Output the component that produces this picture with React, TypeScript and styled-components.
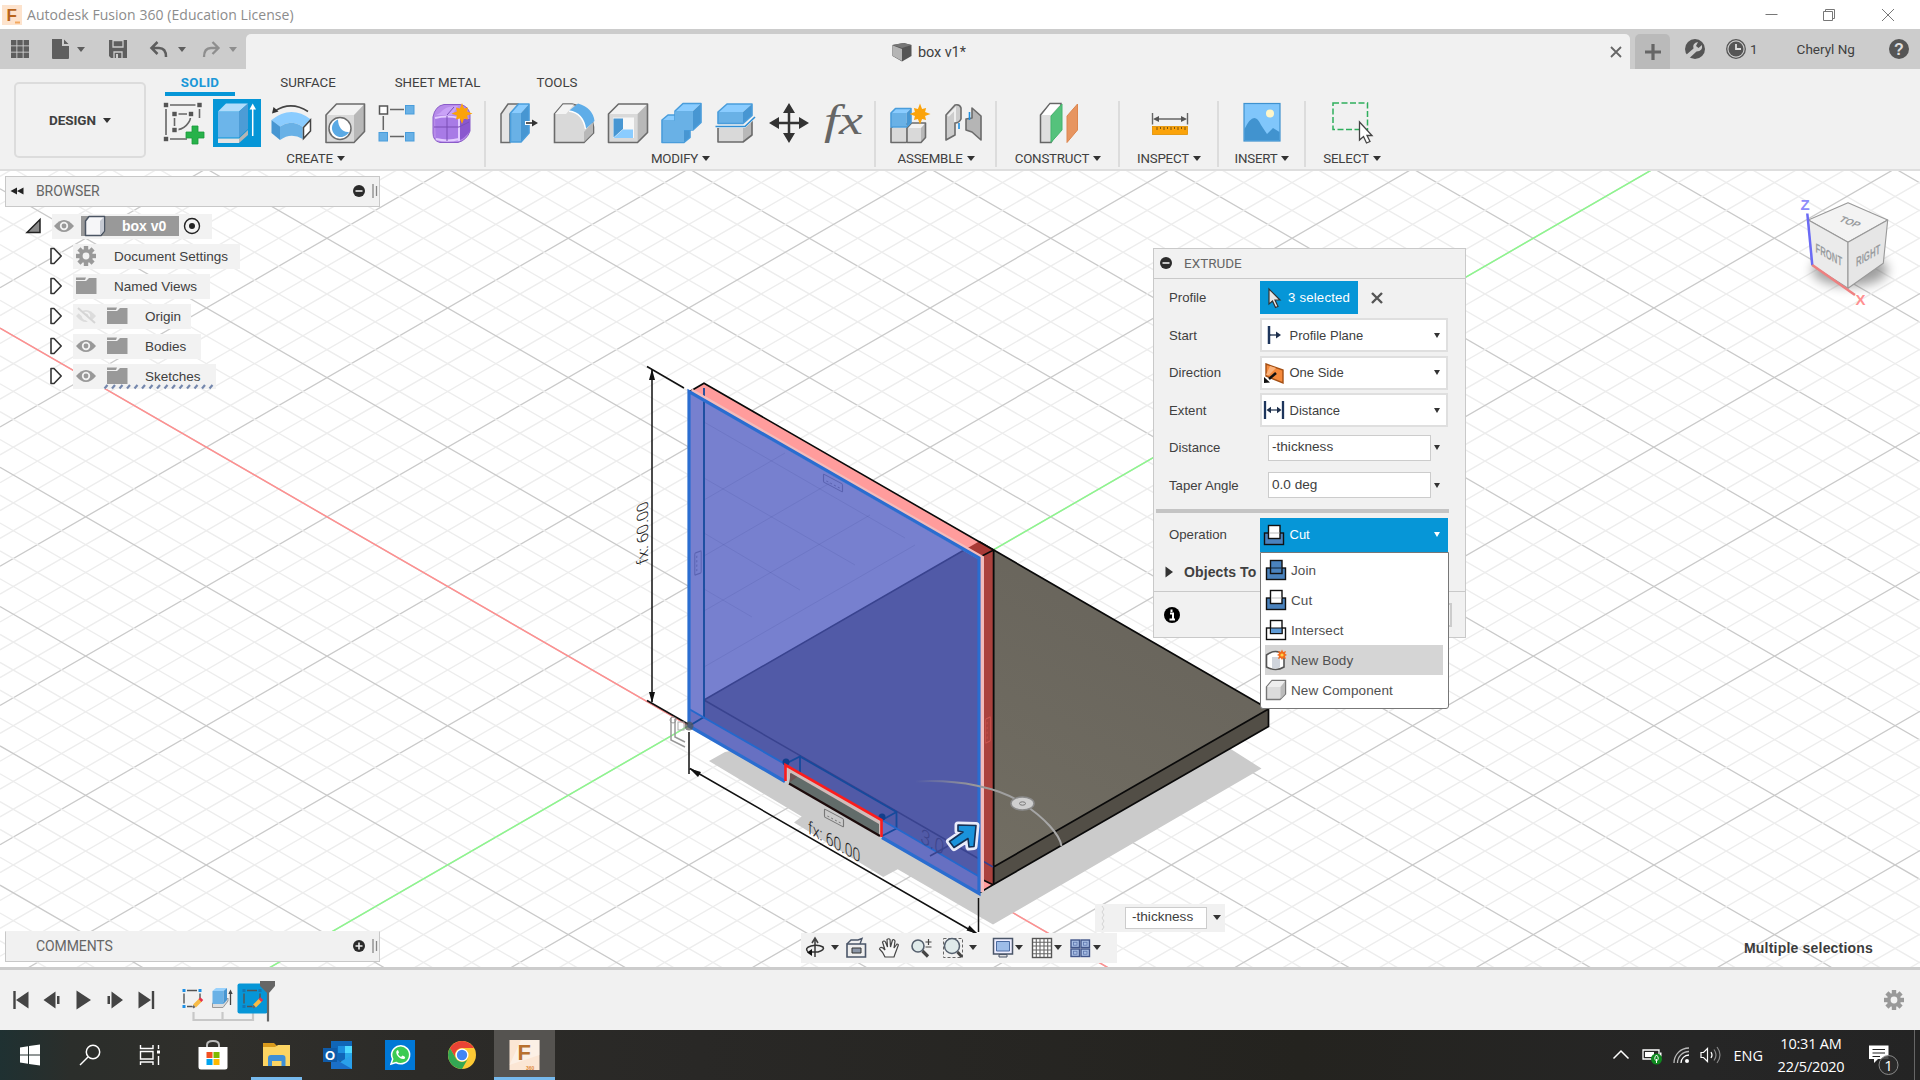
import React from "react";
import styled, { createGlobalStyle } from "styled-components";

const UI = `"Liberation Sans", Arial, sans-serif`;
const CAPS = `Roboto, "Liberation Sans", sans-serif`;
const WIN = `"Open Sans", "Noto Sans", sans-serif`;

const Global = createGlobalStyle`
  * { box-sizing: border-box; }
  html, body { margin: 0; padding: 0; background: #fff; }
  body { width: 1920px; height: 1080px; overflow: hidden; font-family: ${UI}; color: #404040; }
  svg { display: block; flex: none; overflow: visible; }
`;

const Screen = styled.div`
  display: flex;
  flex-direction: column;
  width: 1920px;
  height: 1080px;
  overflow: hidden;
`;

/* ---------- generic icon holder, origin in the middle ---------- */
const Ico = ({ s = 48, h, children }: { s?: number; h?: number; children: React.ReactNode }) => {
  const hh = h ?? s;
  return (
    <svg width={s} height={hh} viewBox={`${-s / 2} ${-hh / 2} ${s} ${hh}`}>
      {children}
    </svg>
  );
};

const Caret = styled.span<{ $c?: string; $w?: number }>`
  flex: none;
  width: 0;
  height: 0;
  border-left: ${(p) => p.$w ?? 4}px solid transparent;
  border-right: ${(p) => p.$w ?? 4}px solid transparent;
  border-top: ${(p) => (p.$w ?? 4) + 1.5}px solid ${(p) => p.$c ?? "#333"};
`;

/* ---------- title bar ---------- */
const TitleBar = styled.header`
  display: flex;
  align-items: center;
  flex: none;
  height: 29px;
  padding: 0 22px 0 2px;
  background: #fff;
`;
const TitleText = styled.span`
  flex: 1;
  padding-left: 5px;
  font: 14px ${WIN};
  letter-spacing: 0.05px;
  color: #8c8c8c;
`;
const WindowButtons = styled.div`
  display: flex;
  gap: 38px;
`;

/* ---------- tab bar ---------- */
const TabBar = styled.div`
  display: flex;
  align-items: flex-end;
  flex: none;
  height: 40px;
  background: #ccc;
`;
const QuickTools = styled.div`
  display: flex;
  align-items: center;
  width: 246px;
  height: 40px;
  padding-left: 10px;
`;
const Gap = styled.span<{ $w: number }>`
  flex: none;
  width: ${(p) => p.$w}px;
`;
const DocTab = styled.div`
  display: flex;
  align-items: center;
  width: 1384px;
  height: 35px;
  padding: 1px 5px 0 645px;
  border-radius: 5px 5px 0 0;
  background: #f1f1f1;
`;
const DocName = styled.span`
  flex: 1;
  padding-left: 5px;
  font: 14.5px ${CAPS};
  letter-spacing: -0.1px;
`;
const NewTab = styled.div`
  display: flex;
  align-items: center;
  justify-content: center;
  width: 35px;
  height: 35px;
  margin-left: 5px;
  border-radius: 5px 5px 0 0;
  background: #bababa;
`;
const Account = styled.div`
  display: flex;
  align-items: center;
  height: 40px;
  padding-left: 14px;
  font: 13.5px ${CAPS};
`;

/* ---------- ribbon ---------- */
const Ribbon = styled.section`
  display: flex;
  flex: none;
  height: 102px;
  padding: 13px 0 12px 14px;
  border-bottom: 2px solid #dedede;
  background: #f1f1f1;
`;
const DesignButton = styled.div`
  display: flex;
  align-items: center;
  justify-content: center;
  gap: 7px;
  width: 132px;
  height: 76px;
  border: 2px solid #dcdcdc;
  border-radius: 5px;
  font: 700 13.5px ${CAPS};
  letter-spacing: -0.1px;
`;
const RibbonMain = styled.div`
  display: flex;
  flex-direction: column;
  margin-top: -13px;
`;
const TabRow = styled.nav`
  display: flex;
  height: 28px;
  padding-left: 19px;
`;
const RibbonTab = styled.div<{ $w: number; $on?: boolean }>`
  width: ${(p) => p.$w}px;
  height: 27px;
  padding-top: 6px;
  border-bottom: 4px solid ${(p) => (p.$on ? "#0696d7" : "transparent")};
  font: ${(p) => (p.$on ? 700 : 400)} 13.3px/16px ${CAPS};
  letter-spacing: ${(p) => (p.$on ? 0.3 : -0.05)}px;
  text-align: center;
  color: ${(p) => (p.$on ? "#1a98d8" : "#404040")};
`;
const Groups = styled.div`
  display: flex;
  height: 68px;
`;
const Group = styled.div<{ $w: number; $last?: boolean }>`
  display: flex;
  flex-direction: column;
  align-items: center;
  width: ${(p) => p.$w}px;
  height: 66px;
  margin-top: 5px;
  border-right: ${(p) => (p.$last ? 0 : 2)}px solid #dcdcdc;
`;
const IconRow = styled.div`
  display: flex;
  height: 48px;
  margin-top: -2px;
`;
const Cell = styled.div<{ $shift?: number }>`
  display: flex;
  justify-content: center;
  width: 54px;
  padding-left: ${(p) => (p.$shift ?? 0) * 2}px;
`;
const GroupLabel = styled.div`
  display: flex;
  align-items: center;
  gap: 4px;
  height: 18px;
  margin-top: 2px;
  padding-left: 1px;
  font: 13.3px ${CAPS};
  letter-spacing: -0.2px;
  white-space: nowrap;
`;

const G = { f: "#d9d9d9", t: "#f2f2f2", s: "#b8b8b8", o: "#6b6b6b" };
const B = { f: "#69b1e6", t: "#8accff", s: "#4796d2", o: "#4a9ddb" };
type Pal = typeof G;

const Box3 = ({ x, y, w, h, dx, dy, c }: { x: number; y: number; w: number; h: number; dx: number; dy: number; c: Pal }) => (
  <g strokeLinejoin="round">
    <path d={`M${x} ${y}h${w}v${h}h${-w}z`} fill={c.f} />
    <path d={`M${x} ${y}l${dx} ${-dy}h${w}l${-dx} ${dy}z`} fill={c.t} />
    <path d={`M${x + w} ${y}l${dx} ${-dy}v${h}l${-dx} ${dy}z`} fill={c.s} />
    <path d={`M${x} ${y}l${dx} ${-dy}h${w}v${h}l${-dx} ${dy}h${-w}z`} fill="none" stroke={c.o} strokeWidth="1.6" />
  </g>
);
const Star = ({ x, y, r }: { x: number; y: number; r: number }) => {
  const pts = Array.from({ length: 16 }, (_, i) => {
    const a = (i * Math.PI) / 8 - Math.PI / 2;
    const k = i % 2 ? 0.52 : i % 4 === 0 ? 1 : 0.82;
    return `${x + Math.cos(a) * r * k},${y + Math.sin(a) * r * k}`;
  });
  return <polygon points={pts.join(" ")} fill="#fba30a" />;
};

const SketchIcon = () => (
  <Ico>
    <path
      d="M-17-18H16.500M-17-18V16M16.500-18V-5M-17 16H4M-8.500-9H8M-8.500-9V7M8-9C8 0 1 7-8.500 7"
      fill="none"
      stroke="#666"
      strokeWidth="1.600"
    />
    {[[-17, -18], [16.5, -18], [-17, 16], [-8.5, -9], [8, -9], [-8.5, 7]].map(([x, y]) => (
      <g key={`${x},${y}`}>
        <rect x={x - 4} y={y - 4} width="8" height="8" fill="#f1f1f1" />
        <rect x={x - 2.2} y={y - 2.2} width="4.4" height="4.4" fill="#555" />
      </g>
    ))}
    <path d="M9 3h6v6h6v6h-6v6h-6v-6h-6v-6h6z" fill="#27b24a" stroke="#199a3a" strokeWidth=".8" />
  </Ico>
);
const ExtrudeIcon = () => (
  <Ico>
    <rect x="-24" y="-24" width="48" height="48" fill="#0696d7" />
    <path d="M-19-11.5H2V14.500H-19z" fill="#6cb5ea" />
    <path d="M-19-11.500L-11-19.500H11L2-11.500z" fill="#b0dcfb" />
    <path d="M2-11.500L11-19.500V6L2 14.500z" fill="#4c9cd6" />
    <path d="M-19 15.500H2V20H-19z" fill="#e4e4e4" />
    <path d="M2 15.500L11 7V12L2 20z" fill="#b5b5b5" />
    <path d="M15.700 13V-14" stroke="#fff" strokeWidth="1.500" />
    <path d="M12.500-13.500L15.700-19.500 19-13.500z" fill="#fff" />
  </Ico>
);
const RevolveIcon = () => (
  <Ico>
    <path d="M-19.500-3Q0-18.500 20-3.500L11.700 4Q0-4-11 3.500z" fill="#8accff" />
    <path d="M-19.500-3L-11 3.500V17L-19.500 10z" fill="#4796d2" />
    <path d="M-11 3.500Q0-4 11.700 4V16Q0 9-11 17z" fill="#69b1e6" />
    <path d="M12.500 4.500L19.500-3V8L12.500 15.500z" fill="#fff" stroke="#444" strokeWidth="1.500" />
    <path d="M-16-12Q0-22.500 17-11.500" fill="none" stroke="#444" strokeWidth="1.500" />
    <path d="M-19-9.500L-17.500-16 -12.500-11.500z" fill="#333" />
  </Ico>
);
const HoleIcon = () => (
  <Ico>
    <Box3 x={-19} y={-8} w={28} h={27.5} dx={10.500} dy={11} c={G} />
    <circle cx="-5" cy="5.500" r="11" fill="#fff" stroke="#6b6b6b" strokeWidth="1.500" />
    <path d="M-7-3.500A9 9 0 1 0 4 9C-2 10-7 4-7-3.500z" fill="#5aa9e4" />
  </Ico>
);
const PatternIcon = () => (
  <Ico>
    <path d="M-6-13.500H8M-6 13.500H8M-12.700-7V7" stroke="#666" strokeWidth="1.500" />
    <rect x="-16.500" y="-17" width="8" height="8" fill="#fff" stroke="#555" strokeWidth="1.500" />
    {[[9.500, -17.500], [9.500, 9.500], [-17, 9.500]].map(([x, y]) => (
      <rect key={`${x}${y}`} x={x} y={y} width="8.500" height="8.500" fill="#69b1e6" stroke="#4a9ddb" />
    ))}
  </Ico>
);
const FormIcon = () => (
  <Ico>
    <path d="M-19-6Q-17-17-8-18.500H8Q17-17 18-8V8Q15 17 6 19.500H-12Q-19 18-19 10z" fill="#b78bea" stroke="#8a5cc8" />
    <path d="M-12-10Q-6-18 6-17L0-8H-16z" fill="#c9a2f7" />
    <path d="M8-4L18-4V8Q13 15 8 17z" fill="#8a57cf" />
    <path d="M-17-6Q-4-9 7-6V16Q-4 19-16 16z" fill="#a87be6" />
    <path d="M-17-5Q-5-8 7-5M7-6V18M-16 16Q-4 19 7 16" stroke="#e3ccff" fill="none" strokeWidth="2" />
    <path d="M-18 4H7L17-1M-5-7V18M-5-8L2-16" stroke="#7a4fb5" fill="none" strokeWidth="1" />
    <Star x={10} y={-9.500} r={10.500} />
  </Ico>
);
const PressPullIcon = () => (
  <Ico>
    <path d="M-19-9L-12-19H-2V-12L-10-9V19.500H-19z" fill="#e4e4e4" stroke="#6b6b6b" strokeWidth="1.500" />
    <Box3 x={-9.500} y={-10} w={10.500} h={29} dx={8} dy={9} c={B} />
    <path d="M5 0H13" stroke="#fff" strokeWidth="4" />
    <path d="M6 0H13" stroke="#333" strokeWidth="1.600" />
    <path d="M12-3.500L18 0 12 3.500z" fill="#333" />
  </Ico>
);
const FilletIcon = () => (
  <Ico>
    <path d="M-19.500-9L-11-19H-2Q17-15 19.500 4V10L10 19.500H-19.500z" fill="#d9d9d9" stroke="#6b6b6b" strokeWidth="1.600" />
    <path d="M-19-9L-11-18.500H0L-8-9z" fill="#f4f4f4" />
    <path d="M10 9L19-1V10L10 19z" fill="#b8b8b8" />
    <path d="M-4-13L4-19.500Q19-15 20.500-2L11.500 6Q9-10-5-12z" fill="#5fade8" />
    <path d="M-5-12Q9-10 11.500 6" stroke="#fff" fill="none" strokeWidth="1.500" />
  </Ico>
);
const ShellIcon = () => (
  <Ico>
    <Box3 x={-19.500} y={-9} w={29} h={28.500} dx={10} dy={10} c={G} />
    <rect x="-15" y="-5.500" width="21" height="20.500" fill="#f7f7f7" />
    <path d="M-14.500-4.500H-5V6L-14.500 14.500z" fill="#4796d2" />
    <path d="M-14.500 15L-5 6.500H5V15z" fill="#8accff" />
  </Ico>
);
const CombineIcon = () => (
  <Ico>
    <Box3 x={-19} y={-3} w={22} h={22.500} dx={6} dy={5} c={B} />
    <Box3 x={-6} y={-12} w={18} h={19} dx={8} dy={7.500} c={B} />
    <path d="M-18-2.500H3V19H-18zM-6-11.500H12V7H-6z" fill="#69b1e6" />
  </Ico>
);
const SplitIcon = () => (
  <Ico>
    <Box3 x={-17} y={5} w={25} h={14} dx={9} dy={7} c={G} />
    <path d="M-19.500 0H9L20-10V-4L10 5H-19.500z" fill="#f1f1f1" />
    <Box3 x={-17} y={-11} w={25} h={11.500} dx={9} dy={8} c={B} />
    <path d="M-19.500 3.500H10L20-6" stroke="#2f8fd6" fill="none" strokeWidth="1.600" />
  </Ico>
);
const MoveIcon = () => (
  <Ico>
    <path d="M0-15V15M-15 0H15" stroke="#333" strokeWidth="2.500" />
    <path d="M0-20L6-10H-6zM0 20L6 10H-6zM-20 0L-10-6V6zM20 0L10-6V6z" fill="#333" />
  </Ico>
);
const FxIcon = () => (
  <Ico>
    <text x="-18" y="11" fontFamily="Liberation Serif, serif" fontStyle="italic" fontSize="42" fill="#666" textLength="39" lengthAdjust="spacingAndGlyphs">
      fx
    </text>
  </Ico>
);
const NewComponentIcon = () => (
  <Ico>
    <Box3 x={-18} y={5} w={15} h={14.500} dx={5} dy={4} c={G} />
    <Box3 x={-2} y={5} w={14} h={14.500} dx={4.500} dy={5} c={G} />
    <Box3 x={-18} y={-10} w={15.500} h={14} dx={4.500} dy={4.500} c={B} />
    <Star x={11} y={-9} r={10.500} />
  </Ico>
);
const JointIcon = () => (
  <Ico>
    <path d="M-17-8L-8-18Q-3-19-2-15V-4Q-4 0-8 0V12L-17 17z" fill="#ccc" stroke="#6b6b6b" strokeWidth="1.600" strokeLinejoin="round" />
    <path d="M-15-7L-8-14V-1" fill="none" stroke="#eee" strokeWidth="2" />
    <path d="M18-7L9-15V-5L3-4V7L9 9 18 17z" fill="#b5b5b5" stroke="#6b6b6b" strokeWidth="1.600" strokeLinejoin="round" />
    <path d="M-4 0V6M6.500-11V-3" stroke="#1f8fe0" strokeWidth="1.600" />
  </Ico>
);
const ConstructIcon = () => (
  <Ico>
    <path d="M-18.500-8L-9-19.500H2V0L-8 19.500H-18.500z" fill="#dedede" stroke="#666" strokeWidth="1.500" />
    <path d="M-17-8L-9-18.500H1L-8-8z" fill="#fff" />
    <path d="M-8-7L3-19V7L-8 19.500z" fill="#55c27c" stroke="#43b56c" />
    <path d="M8-7L18.500-19V7L8 19.500z" fill="#e79560" stroke="#dd864e" />
  </Ico>
);
const MeasureIcon = () => (
  <Ico>
    <path d="M-17.500-10V1.500M17.500-10V1.500M-13-4H13" stroke="#666" strokeWidth="1.400" />
    <path d="M-17-4L-11-7V-1zM17-4L11-7V-1z" fill="#555" />
    <rect x="-17.500" y="3.500" width="35" height="8" fill="#fba30a" stroke="#e08f00" strokeWidth=".8" />
    <path d="M-13 4v3M-9.500 4v2M-6 4v3M-2.500 4v2M1 4v3M4.500 4v2M8 4v3M11.500 4v2M15 4v3" stroke="#7a5310" />
  </Ico>
);
const InsertIcon = () => (
  <Ico>
    <rect x="-18" y="-19.500" width="36" height="37.500" fill="#80c6fb" stroke="#3f92cf" strokeWidth="1.200" />
    <path d="M-17.500 6Q-8-14-1 2L5 11 11 5 17.500 9V17.500H-17.500z" fill="#4193cf" />
    <circle cx="8" cy="-9.500" r="4" fill="#fff6c8" />
  </Ico>
);
const SelectIcon = () => (
  <Ico>
    <rect x="-19" y="-20" width="34.500" height="26.500" fill="none" stroke="#2fae5c" strokeWidth="1.500" strokeDasharray="6 2.500" />
    <path d="M7.500-1V17L11.500 13.500 14.500 20 18 18.500 15 12.500H20z" fill="#fff" stroke="#444" strokeWidth="1.300" />
  </Ico>
);

/* ---------- viewport ---------- */
const Viewport = styled.main`
  position: relative;
  flex: none;
  height: 796px;
  overflow: hidden;
  background: #fff;
`;
const Scene = styled.svg`
  position: absolute;
  inset: 0;
`;
const Floating = styled.div<{ $x: number; $y: number }>`
  position: absolute;
  left: ${(p) => p.$x}px;
  top: ${(p) => p.$y}px;
`;

const K = 69.63 / 120.63;
const STEP = (69.63 * 2) / 5;
const GridLines = () => {
  const out: React.ReactNode[] = [];
  const c0 = 328.1;
  const d0 = 1123.3;
  for (let i = -50; i < 75; i++) {
    const major = ((i % 5) + 5) % 5 === 0;
    const a = c0 + i * STEP;
    const b = d0 + i * STEP;
    out.push(
      <path
        key={i}
        d={`M0 ${a}L1920 ${a + 1920 * K}M0 ${b}L1920 ${b - 1920 * K}`}
        stroke={major ? "#cacaca" : "#ededed"}
        strokeWidth={major ? 1.3 : 1.4}
      />
    );
  }
  return <g>{out}</g>;
};

const Constraint = ({ t, c = "#777" }: { t: string; c?: string }) => (
  <g transform={t} fill="none" stroke={c} strokeWidth="1.200">
    <rect x="-10" y="-4" width="20" height="8" rx="1" />
    <path d="M-7 1.500h2M-3 1.500h2M1 1.500h2M5 1.500h2" />
  </g>
);

const Model = () => (
  <Scene width="1920" height="796" viewBox="0 171 1920 796">
    <defs>
      <linearGradient id="plate" x1="0" y1="1" x2="1" y2="0">
        <stop offset="0" stopColor="#757165" />
        <stop offset="1" stopColor="#66625a" />
      </linearGradient>
      <linearGradient id="arc" x1="915" x2="1062" y1="0" y2="0" gradientUnits="userSpaceOnUse">
        <stop offset="0" stopColor="#999" stopOpacity="0" />
        <stop offset=".4" stopColor="#999" />
        <stop offset="1" stopColor="#aaa" />
      </linearGradient>
      <filter id="soft" x="-50%" y="-50%" width="200%" height="200%">
        <feGaussianBlur stdDeviation="6" />
      </filter>
    </defs>
    <GridLines />
    <path d={`M0 328.100L1920 ${328.1 + 1920 * K}`} stroke="#ff8f8f" strokeWidth="1.500" />
    <path d={`M0 1123.300L1920 ${1123.3 - 1920 * K}`} stroke="#8df78d" strokeWidth="1.500" />

    {/* ground shadow */}
    <path d="M709 761L725 752 L979 700 L1230 748.500 L1261.500 768.500 L993 924.500 L897.700 869.300 L883.300 877 L794 822.500 L801.700 816.500z" fill="#cbcbcb" />

    {/* base plate */}
    <path d="M704 700L979 541.500 1268.500 709 993.500 867z" fill="url(#plate)" />
    <path d="M993.500 867L1268.500 709V726.500L993.500 884.500z" fill="#524e46" />
    <path d="M979 541.500L1268.500 709V726.500L993.500 884.500M993.500 867L1268.500 709M993.500 550V884" fill="none" stroke="#0a0a0a" strokeWidth="1.700" />

    {/* cut volume: top and right faces */}
    <path d="M689 391.500L704 383.200 993.500 550 979 558z" fill="#ff9c9c" />
    <path d="M965 549.500L979 541.500 993.500 550 979 558z" fill="#a93a37" />
    <path d="M979 558L993.500 550V884.500L979 893z" fill="#ab423e" />
    <path d="M979 878L993.500 884.500 979 893z" fill="#ff9c9c" />
    <path d="M689 392L704 383.200 993.500 550M979 557.500L993.500 550V884.500L979 893M979 878L993.500 885" fill="none" stroke="#0a0a0a" strokeWidth="1.600" />

    {/* selected profile */}
    <path d="M689 391.500L979 558V893.500L882 837.500V820L785 764V781.500L689 726z" fill="#7780cf" />
    <path d="M704 700L965 549.500 979 557.500V876.500L882 820.500 785 764.500 704 717.500z" fill="#515aa7" />
    <path d="M689 709L785 764V781.500L689 726zM882 820L979 876.500V893.500L882 837.500z" fill="#6770c2" />
    <g opacity=".14" stroke="#3a3f90" fill="none">
      <path d="M704 478L855 565M704 533L800 590M704 589L752 617M704 422L905 538M704 611L870 515M704 500L785 453M704 556L830 483M704 667L915 545" />
    </g>
    <path d="M704 700L965 549.500M704 700L993 867" fill="none" stroke="#39438f" strokeWidth="1.500" />
    <path d="M704 388V717L689 726M785 764L800 756.500V772M800 756.500L896.500 812V828.500L882 836M882 820L896.500 812" fill="none" stroke="#164a9c" strokeWidth="1.800" />
    <path d="M689 709L785 764M882 820L979 876.500" stroke="#2468cc" strokeWidth="2" />
    <path d="M691 391L981.500 558V892" fill="none" stroke="#f3bcbc" strokeWidth="5" />
    <path d="M785 781.500L689 726V391.500L979 558V893.500L882 837.500" fill="none" stroke="#2a6dd0" strokeWidth="3.200" />
    <circle cx="786" cy="762" r="3.500" fill="#123f8c" />
    <circle cx="882" cy="817" r="3.500" fill="#123f8c" />

    {/* slot */}
    <path d="M787 766L881 820V836L789 783.500z" fill="#d1bcba" />
    <path d="M791 773L879 824V835L789 783z" fill="#626c6a" />
    <path d="M790 773L797 777 790 782z" fill="#6c5555" />
    <path d="M789 783.500L880 836" stroke="#1c0b0b" strokeWidth="2.200" />
    <path d="M785.500 781V765L881.500 820V837" fill="none" stroke="#fb1d1d" strokeWidth="2.600" />

    {/* dimensions */}
    <g stroke="#111" strokeWidth="1.500" fill="none">
      <path d="M652 369V702M647 366.500L684 388M647 700.500L688 724" />
      <path d="M689 732V774M978.500 898V932M690 768.500L977 934" />
    </g>
    <path d="M652 369l3 11h-6zM652 703l3-11h-6zM689.500 768.500l11.500 3.500-3 5zM978 934l-11.500-3.500 3-5z" fill="#111" />
    <g fontFamily="Roboto, sans-serif" fontWeight="300" fontSize="18">
      <text transform="matrix(0 -1 .87 -.35 648 562)" textLength="62" lengthAdjust="spacingAndGlyphs" fill="#222">
        fx: 60.00
      </text>
      <text transform="matrix(.87 .5 0 1 808 833)" textLength="60" lengthAdjust="spacingAndGlyphs" fill="#222">
        fx: 60.00
      </text>
      <text transform="matrix(.87 .5 -.1 1 920 842)" fill="#3d458d" fontSize="20">
        3.0
      </text>
    </g>
    <path d="M930 856L948 846" stroke="#39438f" strokeWidth="1.500" />
    <Constraint t="matrix(.95 .5 0 1 834 818)" />
    <Constraint t="matrix(.95 .5 0 1 833 483)" c="#5a62b0" />
    <Constraint t="matrix(0 1.100 -.8 .3 698 563)" c="#5a62b0" />
    <Constraint t="matrix(0 1.200 -.6 .3 988 730)" c="#cc5550" />
    <path d="M671 718v22l14 7M675 719v18l10 5" fill="none" stroke="#999" strokeWidth="1.500" />
    <circle cx="673" cy="720" r="3" fill="none" stroke="#999" />
    <circle cx="689" cy="726" r="4.500" fill="#555" opacity=".7" />
    <rect x="678" y="722" width="6" height="8" fill="none" stroke="#aaa" />

    {/* angle manipulator */}
    <path d="M915 781.500C960 779 1000 788 1022 803C1045 818 1060 835 1061.500 846" fill="none" stroke="url(#arc)" strokeWidth="2" />
    <ellipse cx="1022.500" cy="803.500" rx="11.500" ry="6.500" fill="#cfcfcf" stroke="#8b8b8b" strokeWidth="1.500" />
    <ellipse cx="1022.500" cy="803.500" rx="3" ry="1.700" fill="none" stroke="#777" />
    <g strokeLinejoin="round">
      <path d="M958 825L976 825.500 974 846.500 969 847 968 838.500 954 847.500 949.500 841.500 963 832 958 831z" fill="#eef" stroke="#e9ebfa" strokeWidth="7" />
      <path d="M958 825L976 825.500 974 846.500 969 847 968 838.500 954 847.500 949.500 841.500 963 832 958 831z" fill="#1a93dc" stroke="#153055" strokeWidth="1.600" />
    </g>

    {/* view cube */}
    <ellipse cx="1850" cy="270" rx="38" ry="16" fill="#000" opacity=".38" filter="url(#soft)" />
    <g stroke="#999" strokeWidth="1.100" strokeLinejoin="round">
      <path d="M1808.300 220L1848 202.700 1887.700 220 1848 242.300z" fill="#f3f3f3" />
      <path d="M1808.300 220L1848 242.300V288.300L1811.700 265z" fill="#ebebeb" />
      <path d="M1887.700 220L1848 242.300V288.300L1883.300 263.300z" fill="#e6e6e6" />
    </g>
    <g fontFamily="Liberation Sans, sans-serif" fontWeight="700" fill="#9a9da0">
      <text transform="matrix(.95 .52 0 1.200 1815.500 252)" fontSize="11" textLength="28" lengthAdjust="spacingAndGlyphs">FRONT</text>
      <text transform="matrix(.9 -.52 0 1.200 1856 267)" fontSize="11" textLength="27" lengthAdjust="spacingAndGlyphs">RIGHT</text>
      <text transform="matrix(.95 .35 -.6 .6 1838 221)" fontSize="12" textLength="20" lengthAdjust="spacingAndGlyphs">TOP</text>
    </g>
    <path d="M1807.300 213.500L1812.300 265" stroke="#6a6af5" strokeWidth="2.500" />
    <path d="M1812.300 265L1855 295" stroke="#ee8080" strokeWidth="2.500" />
    <g fontFamily="Liberation Sans, sans-serif" fontWeight="700" fontSize="15">
      <text x="1800.500" y="210" fill="#8c8cfa">Z</text>
      <text x="1855.500" y="305" fill="#ff9090">X</text>
    </g>
  </Scene>
);

/* ---------- browser ---------- */
const PanelBar = styled.div<{ $noTop?: boolean }>`
  display: flex;
  align-items: center;
  width: 375px;
  height: 31px;
  padding: 0 0 1px 4px;
  border: 1.5px solid #c8c8c8;
  ${(p) => p.$noTop && "border-top-color: #f1f1f1;"}
  background: #f1f1f1;
  font: 14px ${CAPS};
  letter-spacing: -0.1px;
  color: #666;
`;
const PanelTitle = styled.span`
  flex: 1;
  padding-left: 12px;
`;
const Tree = styled.div`
  padding-top: 4px;
`;
const TreeRow = styled.div<{ $indent: number }>`
  display: flex;
  align-items: center;
  height: 30px;
  padding-left: ${(p) => p.$indent}px;
`;
const TreeBody = styled.div<{ $w: number; $pad?: number }>`
  display: flex;
  align-items: center;
  position: relative;
  width: ${(p) => p.$w}px;
  height: 25px;
  margin-left: 11px;
  padding-left: ${(p) => p.$pad ?? 3}px;
  background: #f2f2f2;
  font-size: 13.5px;
  white-space: nowrap;
`;
const RootChip = styled.div`
  display: flex;
  align-items: center;
  width: 98px;
  height: 20px;
  margin: 0 3px 0 6px;
  padding-left: 3px;
  background: #999;
  color: #fff;
  font: 700 14px ${UI};
`;
const Squiggle = styled.span`
  position: absolute;
  left: 31px;
  right: 2px;
  bottom: 0;
`;

const EyeIcon = ({ off }: { off?: boolean }) => (
  <Ico s={22} h={20}>
    <path d="M-10 0Q0-12 10 0Q0 12-10 0z" fill={off ? "#dcdcdc" : "#999"} />
    <circle r="4.200" fill="#f2f2f2" />
    <circle r="2.400" fill={off ? "#dcdcdc" : "#999"} />
    {off && <path d="M-9-7L8 9" stroke="#f2f2f2" strokeWidth="4" />}
    {off && <path d="M-8-8L9 7" stroke="#d5d5d5" strokeWidth="2" />}
  </Ico>
);
const FolderIcon = () => (
  <Ico s={22} h={20}>
    <path d="M-10-8.500H0L-1-6H-10zM-10-5H0L3-8H10.500V8H-10z" fill="#999" />
  </Ico>
);
const GearIcon = ({ r = 10 }: { r?: number }) => (
  <Ico s={22}>
    {[0, 45, 90, 135].map((a) => (
      <rect key={a} x={-2.200} y={-r} width="4.400" height={r * 2} fill="#999" transform={`rotate(${a})`} />
    ))}
    <circle r={r * 0.7} fill="#999" />
    <circle r={r * 0.34} fill="#f2f2f2" />
  </Ico>
);
const Expander = () => (
  <Ico s={12} h={20}>
    <path d="M-5-7.500H-2L5.200 0 -2 7.500H-5z" fill="#fff" stroke="#333" strokeWidth="1.600" strokeLinejoin="round" />
  </Ico>
);
const Knob = ({ plus, r = 6 }: { plus?: boolean; r?: number }) => (
  <Ico s={14}>
    <circle r={r} fill="#2b2b2b" />
    <path d={plus ? "M-3.500 0H3.500M0-3.500V3.500" : "M-3.500 0H3.500"} stroke="#eee" strokeWidth="1.600" />
  </Ico>
);
const Grip = () => (
  <Ico s={8} h={16}>
    <path d="M-2-7V7M1.500-5V5" stroke="#888" strokeWidth="1.300" />
  </Ico>
);

const tree = [
  { label: "Document Settings", kind: "gear", w: 167 },
  { label: "Named Views", kind: "folder", w: 137 },
  { label: "Origin", kind: "off", w: 118 },
  { label: "Bodies", kind: "eye", w: 128 },
  { label: "Sketches", kind: "eye", w: 143, line: true },
];

/* ---------- extrude dialog ---------- */
const Dialog = styled.div`
  display: flex;
  flex-direction: column;
  width: 313px;
  height: 390px;
  border: 1.5px solid #c9c9c9;
  background: #f1f1f1;
  font-size: 13.2px;
`;
const DialogHead = styled.div`
  display: flex;
  align-items: center;
  gap: 11px;
  height: 30px;
  padding: 0 0 1px 5px;
  border-bottom: 1.5px solid #c9c9c9;
  font: 13.5px ${CAPS};
  color: #666;
`;
const Row = styled.div`
  display: flex;
  align-items: center;
  height: 37.5px;
  padding-left: 15px;
`;
const RowLabel = styled.span`
  width: 91px;
`;
const Chip = styled.div`
  display: flex;
  align-items: center;
  gap: 4px;
  width: 98px;
  height: 33px;
  margin-right: 11px;
  padding-left: 4px;
  background: #0696d7;
  color: #fff;
  letter-spacing: 0.2px;
`;
const Combo = styled.div<{ $on?: boolean }>`
  display: flex;
  align-items: center;
  width: 188px;
  height: 34px;
  padding: 0 6px 0 1px;
  border: 2px solid ${(p) => (p.$on ? "#0696d7" : "#dfdfdf")};
  background: ${(p) => (p.$on ? "#0696d7" : "#fff")};
  color: ${(p) => (p.$on ? "#fff" : "#404040")};
  font-size: 13px;
`;
const ComboText = styled.span`
  flex: 1;
  padding-left: 4.5px;
`;
const Input = styled.div<{ $w: number; $h?: number; $ml?: number; $pl?: number }>`
  display: flex;
  align-items: center;
  width: ${(p) => p.$w}px;
  height: ${(p) => p.$h ?? 26}px;
  margin: 0 3px 0 ${(p) => p.$ml ?? 8}px;
  padding: 0 0 2px ${(p) => p.$pl ?? 3}px;
  border: 1.5px solid #ccc;
  background: #fff;
  font-size: 13.6px;
`;
const Rule = styled.div`
  width: 293px;
  height: 4px;
  margin: 5px 0 3px 2px;
  background: #c4c4c4;
`;
const Bold = styled.span`
  padding-left: 7px;
  font: 700 14px ${UI};
  letter-spacing: 0.1px;
`;
const Foot = styled.div`
  display: flex;
  align-items: center;
  flex: 1;
  padding: 1px 13px 0 9px;
  border-top: 1.5px solid #c9c9c9;
  justify-content: space-between;
`;
const FootButton = styled.div`
  width: 60px;
  height: 24px;
  border: 2px solid #ccc;
`;
const List = styled.div`
  width: 189px;
  height: 157px;
  padding: 2px 5px;
  border: 1.5px solid #777;
  border-radius: 0 0 3px 3px;
  background: #fff;
`;
const Item = styled.div<{ $on?: boolean }>`
  display: flex;
  align-items: center;
  gap: 4px;
  height: 30px;
  margin-left: -1px;
  background: ${(p) => (p.$on ? "#d5d5d5" : "transparent")};
  font-size: 13.5px;
  letter-spacing: 0.1px;
  color: #505050;
`;

const OpIcon = ({ kind }: { kind: string }) => {
  const dark = "#4a82bd";
  if (kind === "body")
    return (
      <Ico s={22}>
        <path d="M-9.500-5Q0-12 8-5V7Q0 12-9.500 7z" fill="#fff" stroke="#555" strokeWidth="1.600" />
        <path d="M-4-3V8Q0 9 4 7.500V-3z" fill="#cfd4dc" />
        <path d="M6-10.500l1.200 2.500 2.800-1-1 2.800 2 1.200-2 1 1 3-2.800-1-1.200 2-1.200-2-2.800 1 1-3-2-1 2-1.200-1-2.800 2.800 1z" fill="#f26a1b" />
        <circle cx="6" cy="-5" r="1.600" fill="#ffd24a" />
      </Ico>
    );
  if (kind === "component")
    return (
      <Ico s={22}>
        <path d="M-9.500-3L-4-9.500H9.500V4L4 9.500H-9.500z" fill="#dcdcdc" stroke="#777" strokeWidth="1.400" />
        <path d="M-9-3L-4-9H9L4.500-3z" fill="#eee" />
        <path d="M4.500-3L9-8.500V4L4.500 9z" fill="#bbb" />
      </Ico>
    );
  const top = kind === "join" ? dark : "#fff";
  const bottom = kind === "intersect" ? "#fff" : dark;
  return (
    <Ico s={22}>
      <rect x="-9.500" y="-2" width="19" height="11.500" fill={bottom} stroke="#111" strokeWidth="1.400" />
      <rect x="-5.500" y="-9.500" width="11.500" height="13" fill={top} stroke="#111" strokeWidth="1.400" />
      {kind === "intersect" && <rect x="-5.500" y="-2" width="11.500" height="5.500" fill="#5f9bd6" stroke="#111" />}
      {kind !== "intersect" && <path d="M-5-2H5.500" stroke={kind === "join" ? "#123" : "#bbb"} />}
    </Ico>
  );
};
const PlaneIcon = () => (
  <Ico s={22}>
    <path d="M-5-9V9" stroke="#1d355c" strokeWidth="2.500" />
    <path d="M-4 0H4" stroke="#1d2f4c" strokeWidth="1.300" />
    <path d="M2-3.500L7 0 2 3.500z" fill="#1d2f4c" />
  </Ico>
);
const SideIcon = () => (
  <Ico s={22}>
    <path d="M-8-9L9-3V10L-8 3z" fill="#f58a3c" stroke="#a34f14" strokeWidth="1.400" />
    <path d="M-4-7L2-5 -5 2H-8z" fill="#fbb37c" />
    <path d="M2 0L-5 6" stroke="#111" strokeWidth="2.500" />
    <path d="M-10 10V4L-4 9.500z" fill="#111" />
  </Ico>
);
const ExtentIcon = () => (
  <Ico s={22}>
    <path d="M-9-9V9M9-9V9" stroke="#1d355c" strokeWidth="2.300" />
    <path d="M-5 0H5" stroke="#1d2f4c" strokeWidth="1.200" />
    <path d="M-3-3.200L-7.500 0-3 3.200zM3-3.200L7.500 0 3 3.200z" fill="#1d2f4c" />
  </Ico>
);

/* ---------- mini input, nav bar, status ---------- */
const MiniInput = styled.div`
  display: flex;
  align-items: center;
  width: 130px;
  height: 28px;
  padding: 0 0 1px 5px;
  background: #f1f1f1;
`;
const NavBar = styled.div`
  display: flex;
  align-items: center;
  width: 316px;
  height: 30px;
  padding-left: 3px;
  background: #f1f1f1;
`;
const Status = styled.div`
  font: 700 14px ${UI};
  letter-spacing: 0.2px;
  color: #3c3c3c;
  white-space: nowrap;
`;

/* ---------- timeline ---------- */
const Timeline = styled.section`
  display: flex;
  align-items: center;
  flex: none;
  height: 63px;
  padding: 0 15px 0 10px;
  border-top: 3px solid #ccc;
  background: #f1f1f1;
`;
const Player = styled.div`
  display: flex;
  gap: 9.200px;
  width: 170px;
`;
const Spacer = styled.div`
  flex: 1;
`;

/* ---------- task bar ---------- */
const TaskBar = styled.footer`
  display: flex;
  flex: none;
  height: 50px;
  background: linear-gradient(90deg, #1f3132 0, #2b2e2b 70px, #302f2b 220px, #2c2b28 420px, #292826 700px, #24231f 1300px, #262626 1700px, #242424 1920px);
  color: #fff;
`;
const Task = styled.div<{ $w: number; $run?: boolean; $on?: boolean }>`
  display: flex;
  align-items: center;
  justify-content: center;
  width: ${(p) => p.$w}px;
  background: ${(p) => (p.$on ? "#555350" : "transparent")};
  border-bottom: ${(p) => (p.$run ? 3 : 0)}px solid #76b9ed;
  padding-top: ${(p) => (p.$run ? 3 : 0)}px;
`;
const Tray = styled.div`
  display: flex;
  align-items: center;
  font: 14.500px ${WIN};
`;
const Clock = styled.div`
  width: 82px;
  text-align: center;
  font: 14.500px/23px ${WIN};
  letter-spacing: -0.2px;
  white-space: nowrap;
`;
const ShowDesktop = styled.div`
  width: 6px;
  height: 50px;
  border-left: 1px solid #666;
`;

export default function App() {
  return (
    <Screen>
      <Global />
      <TitleBar>
        <Ico s={20}>
          <rect x="-10" y="-10" width="20" height="20" fill="#fde3cd" />
          <text x="-5.500" y="6" fontFamily="Liberation Sans" fontWeight="700" fontSize="17" fill="#b8641c">F</text>
          <path d="M3 7.500h5" stroke="#f3a860" strokeWidth="2" />
        </Ico>
        <TitleText>Autodesk Fusion 360 (Education License)</TitleText>
        <WindowButtons>
          <Ico s={20}><path d="M-6.500-.5H5.500" stroke="#777" /></Ico>
          <Ico s={20}><path d="M-6.500-3.500H2.500V5.500H-6.500zM-4.500-3.500V-5.500H4.500V3.500H2.500" fill="none" stroke="#777" /></Ico>
          <Ico s={20}><path d="M-6-6L6 6M6-6L-6 6" stroke="#777" /></Ico>
        </WindowButtons>
      </TitleBar>

      <TabBar>
        <QuickTools>
          <Ico s={20}>
            {[-9, -2.700, 3.600].map((x) => [-9, -2.700, 3.600].map((y) => <rect key={`${x}${y}`} x={x} y={y} width="5.400" height="5.400" fill="#5e5e5e" />))}
          </Ico>
          <Gap $w={20} />
          <Ico s={20}><path d="M-8-10H2V-3H9V9Q9 10 8 10H-7Q-8 10-8 9zM4-9.500L8.500-5H4z" fill="#5e5e5e" /></Ico>
          <Gap $w={7} />
          <Caret $c="#5e5e5e" />
          <Gap $w={23} />
          <Ico s={20}>
            <path d="M-9-9H9V9H-7L-9 7z" fill="#5e5e5e" />
            <path d="M-5-8.500H5V-2H-5zM-4 9V3H4V9" fill="none" stroke="#ccc" strokeWidth="1.300" />
            <rect x="-2" y="5" width="2" height="4" fill="#ccc" />
          </Ico>
          <Gap $w={21} />
          <Ico s={20}><path d="M-7.500-1H0Q7-1 7 8M-1.500-7L-7.500-1-1.500 5" fill="none" stroke="#5e5e5e" strokeWidth="2.500" /></Ico>
          <Gap $w={9} />
          <Caret $c="#5e5e5e" />
          <Gap $w={15} />
          <Ico s={20}><path d="M7.500-1H0Q-7-1-7 8M1.500-7L7.500-1 1.500 5" fill="none" stroke="#8e8e8e" strokeWidth="2.300" /></Ico>
          <Gap $w={8} />
          <Caret $c="#8e8e8e" />
        </QuickTools>
        <DocTab>
          <Ico s={22}>
            <path d="M-9.500-7L2-9 9.500-7V4L0 9.500-9.500 4z" fill="#555" />
            <path d="M-9-6.500L0-3V9L-9 4z" fill="#b5b5b5" />
            <path d="M-9.500-7L1-9 9.500-7 0-4z" fill="#777" />
          </Ico>
          <DocName>box v1*</DocName>
          <Ico s={18}><path d="M-5-5L5 5M5-5L-5 5" stroke="#666" strokeWidth="1.800" /></Ico>
        </DocTab>
        <NewTab>
          <Ico s={20}><path d="M-8 0H8M0-8V8" stroke="#666" strokeWidth="3.200" /></Ico>
        </NewTab>
        <Account>
          <Ico s={22}>
            <circle r="10" fill="#555" />
            <path d="M-9 6L-1.500-.5Q-3-6 3-7L1-3 3.500-1 7-4Q8 2 1.500 2.500L-5.500 9z" fill="#ccc" />
          </Ico>
          <Gap $w={19} />
          <Ico s={22}>
            <circle r="9.300" fill="none" stroke="#555" strokeWidth="1.300" />
            <circle r="7.500" fill="#555" />
            <path d="M0-5V0H5" fill="none" stroke="#ddd" strokeWidth="1.800" />
          </Ico>
          <Gap $w={3} />
          1
          <Gap $w={39} />
          Cheryl Ng
          <Gap $w={33} />
          <Ico s={22}>
            <circle r="10" fill="#555" />
            <text y="5.500" textAnchor="middle" fontFamily="Liberation Sans" fontWeight="700" fontSize="16" fill="#ddd">?</text>
          </Ico>
        </Account>
      </TabBar>

      <Ribbon>
        <DesignButton>
          DESIGN <Caret />
        </DesignButton>
        <RibbonMain>
          <TabRow>
            <RibbonTab $w={70} $on>SOLID</RibbonTab>
            <RibbonTab $w={146}>SURFACE</RibbonTab>
            <RibbonTab $w={113}>SHEET METAL</RibbonTab>
            <RibbonTab $w={126}>TOOLS</RibbonTab>
          </TabRow>
          <Groups>
            <Group $w={340}>
              <IconRow>
                <Cell $shift={2.5}><SketchIcon /></Cell>
                <Cell $shift={3}><ExtrudeIcon /></Cell>
                <Cell $shift={3}><RevolveIcon /></Cell>
                <Cell $shift={2.5}><HoleIcon /></Cell>
                <Cell><PatternIcon /></Cell>
                <Cell $shift={2}><FormIcon /></Cell>
              </IconRow>
              <GroupLabel>CREATE <Caret /></GroupLabel>
            </Group>
            <Group $w={390}>
              <IconRow>
                <Cell $shift={1.5}><PressPullIcon /></Cell>
                <Cell $shift={1.5}><FilletIcon /></Cell>
                <Cell $shift={1.5}><ShellIcon /></Cell>
                <Cell $shift={1}><CombineIcon /></Cell>
                <Cell $shift={0.5}><SplitIcon /></Cell>
                <Cell $shift={0.5}><MoveIcon /></Cell>
                <Cell><FxIcon /></Cell>
              </IconRow>
              <GroupLabel>MODIFY <Caret /></GroupLabel>
            </Group>
            <Group $w={121}>
              <IconRow>
                <Cell><NewComponentIcon /></Cell>
                <Cell $shift={0.5}><JointIcon /></Cell>
              </IconRow>
              <GroupLabel>ASSEMBLE <Caret /></GroupLabel>
            </Group>
            <Group $w={123}>
              <IconRow><Cell $shift={1}><ConstructIcon /></Cell></IconRow>
              <GroupLabel>CONSTRUCT <Caret /></GroupLabel>
            </Group>
            <Group $w={99}>
              <IconRow><Cell $shift={1}><MeasureIcon /></Cell></IconRow>
              <GroupLabel>INSPECT <Caret /></GroupLabel>
            </Group>
            <Group $w={87}>
              <IconRow><Cell><InsertIcon /></Cell></IconRow>
              <GroupLabel>INSERT <Caret /></GroupLabel>
            </Group>
            <Group $w={91} $last>
              <IconRow><Cell><SelectIcon /></Cell></IconRow>
              <GroupLabel>SELECT <Caret /></GroupLabel>
            </Group>
          </Groups>
        </RibbonMain>
      </Ribbon>

      <Viewport>
        <Model />

        <Floating $x={5} $y={5}>
          <PanelBar>
            <Ico s={14}><path d="M0-3.500V3.500L-6.500 0zM6.500-3.500V3.500L0 0z" fill="#222" /></Ico>
            <PanelTitle>BROWSER</PanelTitle>
            <Knob />
            <Gap $w={5} />
            <Grip />
          </PanelBar>
          <Tree>
            <TreeRow $indent={20}>
              <Ico s={16} h={16}><path d="M7-6.500V6.500H-6z" fill="#8a8a8a" stroke="#222" strokeWidth="1.500" /></Ico>
              <Gap $w={-2} />
              <TreeBody $w={160} $pad={1}>
                <EyeIcon />
                <RootChip>
                  <Ico s={22}>
                    <path d="M-9.500-5L-6-9.500H9.500V5L6 9.500H-9.500z" fill="#f6f6f8" stroke="#4b5563" strokeWidth="1.500" strokeLinejoin="round" />
                    <path d="M5-5L9-9V5L5 9z" fill="#c5c9d2" />
                  </Ico>
                  <Gap $w={16} />
                  box v0
                </RootChip>
                <Ico s={20}>
                  <circle r="7.500" fill="none" stroke="#222" strokeWidth="1.400" />
                  <circle r="3" fill="#222" />
                </Ico>
              </TreeBody>
            </TreeRow>
            {tree.map((n) => (
              <TreeRow key={n.label} $indent={45}>
                <Expander />
                <TreeBody $w={n.w} $pad={2}>
                  {n.kind === "gear" && <GearIcon />}
                  {n.kind === "folder" && <FolderIcon />}
                  {(n.kind === "off" || n.kind === "eye") && (
                    <>
                      <EyeIcon off={n.kind === "off"} />
                      <Gap $w={9} />
                      <FolderIcon />
                    </>
                  )}
                  <Gap $w={17} />
                  {n.label}
                  {n.line && (
                    <Squiggle>
                      <svg width="111" height="5">
                        {Array.from({ length: 15 }, (_, i) => (
                          <path key={i} d={`M${i * 7.5 + 0.500} 4.500l3-3.500`} stroke="#7487ad" strokeWidth="2.200" />
                        ))}
                      </svg>
                    </Squiggle>
                  )}
                </TreeBody>
              </TreeRow>
            ))}
          </Tree>
        </Floating>

        <Floating $x={5} $y={760}>
          <PanelBar $noTop>
            <Gap $w={14} />
            <PanelTitle>COMMENTS</PanelTitle>
            <Knob plus />
            <Gap $w={5} />
            <Grip />
          </PanelBar>
        </Floating>

        <Floating $x={1153} $y={77}>
          <Dialog>
            <DialogHead><Knob /> EXTRUDE</DialogHead>
            <Row>
              <RowLabel>Profile</RowLabel>
              <Chip>
                <Ico s={20}><path d="M-5-9V6L-1.500 3 1.500 9.500 4 8.500 1 2H6z" fill="#e8e8e8" stroke="#333" strokeWidth="1.200" /></Ico>
                3 selected
              </Chip>
              <Ico s={16}><path d="M-5-5L5 5M5-5L-5 5" stroke="#555" strokeWidth="2.400" /></Ico>
            </Row>
            <Row>
              <RowLabel>Start</RowLabel>
              <Combo><PlaneIcon /><ComboText>Profile Plane</ComboText><Caret $w={3.5} /></Combo>
            </Row>
            <Row>
              <RowLabel>Direction</RowLabel>
              <Combo><SideIcon /><ComboText>One Side</ComboText><Caret $w={3.5} /></Combo>
            </Row>
            <Row>
              <RowLabel>Extent</RowLabel>
              <Combo><ExtentIcon /><ComboText>Distance</ComboText><Caret $w={3.5} /></Combo>
            </Row>
            <Row>
              <RowLabel>Distance</RowLabel>
              <Input $w={163}>-thickness</Input><Caret $w={3.5} />
            </Row>
            <Row>
              <RowLabel>Taper Angle</RowLabel>
              <Input $w={163}>0.0 deg</Input><Caret $w={3.5} />
            </Row>
            <Rule />
            <Row>
              <RowLabel>Operation</RowLabel>
              <Combo $on><OpIcon kind="cut" /><ComboText>Cut</ComboText><Caret $c="#fff" $w={3.5} /></Combo>
            </Row>
            <Row>
              <Ico s={8} h={12}><path d="M-7.500-5.500L0 0-7.500 5.500z" fill="#333" /></Ico>
              <Bold>Objects To</Bold>
            </Row>
            <Foot>
              <Ico s={18}>
                <circle r="8" fill="#000" />
                <path d="M-2-1.500H1V4.500M-2.500 4.500H3M-.5-5.500V-3" stroke="#fff" strokeWidth="2" fill="none" />
              </Ico>
              <FootButton />
            </Foot>
          </Dialog>
        </Floating>

        <Floating $x={1260} $y={381}>
          <List>
            <Item><OpIcon kind="join" />Join</Item>
            <Item><OpIcon kind="cut" />Cut</Item>
            <Item><OpIcon kind="intersect" />Intersect</Item>
            <Item $on><OpIcon kind="body" />New Body</Item>
            <Item><OpIcon kind="component" />New Component</Item>
          </List>
        </Floating>

        <Floating $x={1095} $y={733}>
          <MiniInput>
            <Ico s={6} h={26}><path d="M-1-12L1-9-1-6 1-3-1 0 1 3-1 6 1 9-1 12" stroke="#d5d5d5" fill="none" /></Ico>
            <Input $w={82} $h={22} $ml={19} $pl={6}>-thickness</Input>
            <Gap $w={3} />
            <Caret />
          </MiniInput>
        </Floating>

        <Floating $x={801} $y={761.5}>
          <NavBar>
            <Ico s={22}>
              <path d="M0-9V9M-3-5L0-10 3-5" stroke="#444" strokeWidth="1.600" fill="none" />
              <path d="M-7 4Q-11 0-4-2Q3-4 8-1Q10 2 3 4H-4" fill="none" stroke="#333" strokeWidth="1.600" />
              <path d="M-8 4.500L-3 1V8z" fill="#111" />
            </Ico>
            <Gap $w={5} /><Caret /><Gap $w={6} />
            <Ico s={22}>
              <path d="M-9-4H9.500V9H-9z" fill="#eee" stroke="#4a5568" strokeWidth="1.600" />
              <path d="M-4 0H5V5H-4z" fill="#8c97a8" stroke="#333" />
              <path d="M-9-4L-5-8H2L6-9.500 4-4" fill="none" stroke="#4a5568" strokeWidth="1.400" />
            </Ico>
            <Gap $w={11} />
            <Ico s={22}>
              <path d="M-4 9Q-6 4-9.500 1-9-1.500-6 0L-4 2-6.500-6Q-5-8-3.500-6L-1.500-1-2-8.500Q0-10 1-8.500L1.500-1 3.500-8Q5-9 6-7L5 0 8-4Q10-4 9-2L6 6 5 9z" fill="#f7f7f7" stroke="#444" strokeWidth="1.200" />
            </Ico>
            <Gap $w={10} />
            <Ico s={22}>
              <circle cx="-3" cy="-2" r="6" fill="#dfeaea" stroke="#55606e" strokeWidth="1.600" />
              <path d="M1.500 3L7 8.500" stroke="#444" strokeWidth="3.200" />
              <path d="M4.500-6H10.500M7.500-9V-3M4.500-1H10.500" stroke="#444" strokeWidth="1.200" />
            </Ico>
            <Gap $w={10} />
            <Ico s={22}>
              <rect x="-9.500" y="-9.500" width="19" height="19" fill="none" stroke="#666" strokeDasharray="3 2" />
              <circle cx="-1" cy="-2" r="7.500" fill="#dfeaea" stroke="#55606e" strokeWidth="1.500" />
              <path d="M4.500 4L9 9" stroke="#444" strokeWidth="3" />
            </Ico>
            <Gap $w={5} /><Caret /><Gap $w={15} />
            <Ico s={22}>
              <path d="M-9.500-9.500H9.500V6H-9.500z" fill="#eef" stroke="#4a5568" strokeWidth="1.500" />
              <path d="M-6.500-6.500H6.500V3H-6.500z" fill="#9dbce8" stroke="#4a6aa0" />
              <path d="M-4 9H4V6.500H-4z" fill="#ddd" stroke="#4a5568" />
            </Ico>
            <Gap $w={1} /><Caret /><Gap $w={8} />
            <Ico s={22}>
              <rect x="-9.500" y="-9.500" width="19" height="19" fill="#fff" stroke="#555" strokeWidth="1.400" />
              <path d="M-5.700-9V9M-2-9V9M2-9V9M5.700-9V9M-9-5.700H9M-9-2H9M-9 2H9M-9 5.700H9" stroke="#666" strokeWidth="1.100" />
            </Ico>
            <Gap $w={1} /><Caret /><Gap $w={7} />
            <Ico s={22}>
              {[[-9, -8], [1, -8], [-9, 1], [1, 1]].map(([x, y]) => (
                <g key={`${x}${y}`}>
                  <rect x={x} y={y} width="8.500" height="7.500" fill="#a9bfe4" stroke="#42568a" strokeWidth="1.400" />
                  <rect x={x + 2.5} y={y + 2.2} width="3.500" height="3" fill="none" stroke="#5c75ad" strokeWidth=".8" />
                </g>
              ))}
            </Ico>
            <Gap $w={2} /><Caret />
          </NavBar>
        </Floating>

        <Floating $x={1744} $y={769}>
          <Status>Multiple selections</Status>
        </Floating>
      </Viewport>

      <Timeline>
        <Player>
          <Ico s={22}><path d="M-6.500-9V9" stroke="#444" strokeWidth="2.400" /><path d="M7.500-8.500V8.500L-5 0z" fill="#444" /></Ico>
          <Ico s={22}><path d="M3.500-8.500V8.500L-8.500 0zM5-4H7.500V4H5z" fill="#444" /></Ico>
          <Ico s={22}><path d="M-6.500-9.500V9.500L8 0z" fill="#444" /></Ico>
          <Ico s={22}><path d="M-3.500-8.500V8.500L8 0zM-7.500-4H-5V4H-7.500z" fill="#444" /></Ico>
          <Ico s={22}><path d="M-7.500-8.500V8.500L5 0z" fill="#444" /><path d="M7-9V9" stroke="#444" strokeWidth="2.400" /></Ico>
        </Player>
        <svg width="100" height="50" viewBox="180 975 100 50">
          <path d="M193.500 1012V1020H253V1012M222.500 1012V1020" fill="none" stroke="#c8c8c8" strokeWidth="2.200" />
          <rect x="237.500" y="983.500" width="30" height="30" rx="2" fill="#0696d7" />
          {[192, 252].map((x, i) => (
            <g key={x}>
              <path
                d={`M${x - 5} 990.500h10M${x - 5} 1006.500h5M${x - 8} 993.500v10M${x + 8} 993.500v5`}
                fill="none"
                stroke="#555"
                strokeWidth="1.400"
              />
              {[[-8, -8], [8, -8], [-8, 8]].map(([a, b]) => (
                <rect key={`${a}${b}`} x={x + a - 1.500} y={998.5 + b - 1.500} width="3" height="3" fill={i ? "#1377b5" : "#1c8fe6"} />
              ))}
              <path d={`M${x + 8.5} 1000L${x + 2.5} 1006`} stroke="#f7bb45" strokeWidth="4" />
              <path d={`M${x + 8} 1000.500L${x + 9.8} 998.700`} stroke="#e8334a" strokeWidth="4" />
              <path d={`M${x + 2.5} 1006L${x + 0.8} 1007.700`} stroke="#666" strokeWidth="2.500" />
            </g>
          ))}
          <path d="M212.500 1003H223L228 998V1001L223 1007.500H212.500z" fill="#ddd" stroke="#999" />
          <rect x="212.500" y="991" width="11" height="13" fill="#69b1e6" />
          <path d="M212.500 991L216 988H227L223.500 991z" fill="#9ad2fc" />
          <path d="M223.500 991L227 988V1000L223.500 1004z" fill="#4796d2" />
          <path d="M230.500 1005V992" stroke="#444" strokeWidth="1.300" />
          <path d="M228.300 994L230.500 989.500 232.700 994z" fill="#444" />
          <path d="M268 985V1021.500" stroke="#666" strokeWidth="2.200" />
          <path d="M260 981H275V986L269.500 992.500H266.500L260 986z" fill="#666" />
        </svg>
        <Spacer />
        <GearIcon />
      </Timeline>

      <TaskBar>
        <Task $w={60}>
          <Ico s={24}><path d="M-10-7.500L-2-8.700V-.6H-10zM-1-8.900L10-10.500V-.6H-1zM-10 .6H-2V8.700L-10 7.500zM-1 .6H10V10.500L-1 8.900z" fill="#fff" /></Ico>
        </Task>
        <Task $w={60}>
          <Ico s={24}><circle cx="3" cy="-3" r="6.700" fill="none" stroke="#fff" strokeWidth="1.500" /><path d="M-2 2L-10 10" stroke="#fff" strokeWidth="1.500" /></Ico>
        </Task>
        <Task $w={60}>
          <Ico s={24}>
            <path d="M-9.500-10V-6.500H3V-10M-9.500-3.500H3V4H-9.500zM-9.500 10V7H3V10M8.500-10V-6M8.500 1V10" fill="none" stroke="#fff" strokeWidth="1.400" />
            <rect x="7" y="-4.500" width="3" height="3" fill="#fff" />
          </Ico>
        </Task>
        <Gap $w={2} />
        <Task $w={62}>
          <Ico s={32}>
            <path d="M-6-7V-10Q-6-14 0-14T6-10V-7" fill="none" stroke="#bbb" strokeWidth="2" />
            <path d="M-14.500-8H14.500V12Q14.500 14.500 12 14.500H-12Q-14.500 14.500-14.500 12z" fill="#fff" />
            <rect x="-6.500" y="-3" width="6" height="6" fill="#f25022" />
            <rect x=".5" y="-3" width="6" height="6" fill="#7fba00" />
            <rect x="-6.500" y="4" width="6" height="6" fill="#00a4ef" />
            <rect x=".5" y="4" width="6" height="6" fill="#ffb900" />
          </Ico>
        </Task>
        <Gap $w={7} />
        <Task $w={51} $run>
          <Ico s={32}>
            <path d="M-14-12H-3L0-9V0H-14z" fill="#d99a1c" />
            <path d="M-14-8H-2L1-10H13V11H-14z" fill="#fcd462" />
            <path d="M-9 11V3Q-9 0-6 0H5.500Q8.500 0 8.500 3V11H4.500V6H-5V11z" fill="#3f8fd6" />
          </Ico>
        </Task>
        <Gap $w={5} />
        <Task $w={62}>
          <Ico s={32}>
            <rect x="-7" y="-14" width="21" height="20" fill="#1066b8" />
            <path d="M0-9H7V-2H0z" fill="#1c8fe0" />
            <path d="M7-9H14V-2H7z" fill="#50d9ff" />
            <path d="M0-2H7V5H0z" fill="#1066b8" />
            <path d="M7-2H14V5H7z" fill="#28a8ea" />
            <path d="M-7 2L14 12V14H-7z" fill="#1a6fc9" />
            <path d="M14 0V14L2 7z" fill="#2aa0ea" />
            <rect x="-15" y="-7" width="14" height="14" fill="#0f5ba8" />
            <text x="-8" y="5" textAnchor="middle" fontFamily="Liberation Sans" fontWeight="700" fontSize="13" fill="#fff">O</text>
          </Ico>
        </Task>
        <Task $w={62}>
          <Ico s={32}>
            <rect x="-15" y="-15" width="30" height="30" fill="#0078d7" />
            <path d="M-9 9L-7.300 4A9 9 0 1 1-4 7.500z" fill="#3ccb53" stroke="#fff" strokeWidth="1.500" />
            <path d="M-3-4.500Q-4.500-3-3 0 0 4.500 4 4 6 3 4.500 1.500L2.500 .5 1 2Q-1 1-2-1L-1-2.500-2-5z" fill="#fff" />
          </Ico>
        </Task>
        <Task $w={62}>
          <Ico s={32}>
            <circle r="14" fill="#fcc934" />
            <path d="M-12.120-7A14 14 0 0 1 12.120-7H0A7 7 0 0 0-6.060 3.500z" fill="#ea4335" />
            <path d="M-12.120-7A14 14 0 0 0 0 14L6.060 3.500A7 7 0 0 1-6.060 3.500z" fill="#34a853" />
            <circle r="6.500" fill="#fff" />
            <circle r="5.200" fill="#4285f4" />
          </Ico>
        </Task>
        <Gap $w={1} />
        <Task $w={61} $run $on>
          <Ico s={32}>
            <rect x="-15.500" y="-15" width="30" height="30" fill="#fbe6d4" />
            <path d="M-15.500 10L-4-15H14.500V0z" fill="#fff" opacity=".4" />
            <text x="-7.500" y="5" fontFamily="Liberation Sans" fontWeight="700" fontSize="22" fill="#b8702e">F</text>
            <text x="1" y="14.500" fontFamily="Liberation Sans" fontWeight="700" fontSize="5" fill="#e08a3c">360</text>
          </Ico>
        </Task>
        <Spacer />
        <Tray>
          <Ico s={20}><path d="M-7.500 3.500L0-4 7.500 3.500" fill="none" stroke="#fff" strokeWidth="1.500" /></Ico>
          <Gap $w={10} />
          <Ico s={22}>
            <path d="M-9-5H7V4H-9z" fill="none" stroke="#fff" strokeWidth="1.300" />
            <path d="M-7-3H2V2H-7zM8-2.500h1.500v4H8z" fill="#fff" />
            <circle cx="4.500" cy="4" r="5.500" fill="#0f8a1f" />
            <path d="M4.500 0Q8 3.500 4.500 6 1 3.500 4.500 0zM4.500 4V8" fill="none" stroke="#fff" strokeWidth="1" />
          </Ico>
          <Gap $w={8} />
          <Ico s={22}>
            <g fill="none" stroke="#bbb" strokeWidth="1.300">
              <path d="M-8 8A15 15 0 0 1 7-7" />
              <path d="M-4.500 8A11.500 11.500 0 0 1 7-3.500" />
              <path d="M-1 8A8 8 0 0 1 7 0" stroke="#fff" />
            </g>
            <circle cx="5" cy="6" r="2" fill="#fff" />
          </Ico>
          <Gap $w={5} />
          <Ico s={24}>
            <path d="M-9-2.500H-6.500L-2.500-6.500V6.500L-6.500 2.500H-9z" fill="none" stroke="#fff" strokeWidth="1.200" />
            <path d="M1-3Q3 0 1 3" fill="none" stroke="#fff" strokeWidth="1.200" />
            <path d="M4-5.500Q8 0 4 5.500M7-8Q13 0 7 8" fill="none" stroke="#8a8a8a" strokeWidth="1.200" />
          </Ico>
          <Gap $w={11} />
          ENG
          <Gap $w={7} />
          <Clock>10:31 AM<br />22/5/2020</Clock>
          <Gap $w={12} />
          <Ico s={36}>
            <path d="M-13-9.500H6.500V4H-4L-8 8V4H-13z" fill="#fff" />
            <path d="M-9.500-5.500H3M-9.500-2H3M-9.500 1.500H-2" stroke="#222" strokeWidth="1.200" />
            <circle cx="6.500" cy="10" r="9.500" fill="#2b2b2b" fillOpacity=".85" stroke="#8a8a8a" />
            <text x="6.500" y="15.500" textAnchor="middle" fontFamily="Open Sans" fontSize="15" fill="#fff">1</text>
          </Ico>
          <Gap $w={14} />
          <ShowDesktop />
        </Tray>
      </TaskBar>
    </Screen>
  );
}
